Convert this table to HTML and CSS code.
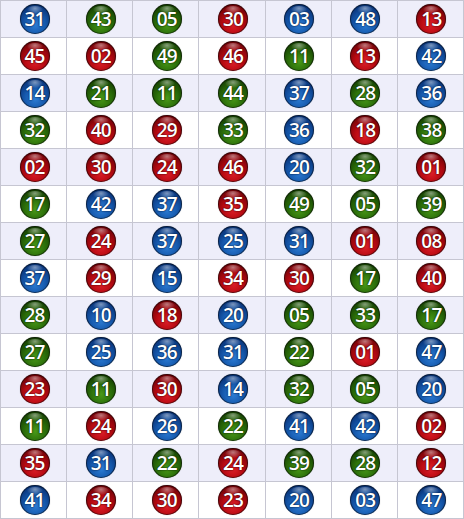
FILE: index.html
```html
<!DOCTYPE html>
<html>
<head>
<meta charset="utf-8">
<link rel="stylesheet" href="styles.css">
</head>
<body>
<div class="grid">
<div class="c a"><span class="b blue">31</span></div><div class="c a"><span class="b green">43</span></div><div class="c a"><span class="b green">05</span></div><div class="c a"><span class="b red">30</span></div><div class="c a"><span class="b blue">03</span></div><div class="c a"><span class="b blue">48</span></div><div class="c a"><span class="b red">13</span></div>
<div class="c"><span class="b red">45</span></div><div class="c"><span class="b red">02</span></div><div class="c"><span class="b green">49</span></div><div class="c"><span class="b red">46</span></div><div class="c"><span class="b green">11</span></div><div class="c"><span class="b red">13</span></div><div class="c"><span class="b blue">42</span></div>
<div class="c a"><span class="b blue">14</span></div><div class="c a"><span class="b green">21</span></div><div class="c a"><span class="b green">11</span></div><div class="c a"><span class="b green">44</span></div><div class="c a"><span class="b blue">37</span></div><div class="c a"><span class="b green">28</span></div><div class="c a"><span class="b blue">36</span></div>
<div class="c"><span class="b green">32</span></div><div class="c"><span class="b red">40</span></div><div class="c"><span class="b red">29</span></div><div class="c"><span class="b green">33</span></div><div class="c"><span class="b blue">36</span></div><div class="c"><span class="b red">18</span></div><div class="c"><span class="b green">38</span></div>
<div class="c a"><span class="b red">02</span></div><div class="c a"><span class="b red">30</span></div><div class="c a"><span class="b red">24</span></div><div class="c a"><span class="b red">46</span></div><div class="c a"><span class="b blue">20</span></div><div class="c a"><span class="b green">32</span></div><div class="c a"><span class="b red">01</span></div>
<div class="c"><span class="b green">17</span></div><div class="c"><span class="b blue">42</span></div><div class="c"><span class="b blue">37</span></div><div class="c"><span class="b red">35</span></div><div class="c"><span class="b green">49</span></div><div class="c"><span class="b green">05</span></div><div class="c"><span class="b green">39</span></div>
<div class="c a"><span class="b green">27</span></div><div class="c a"><span class="b red">24</span></div><div class="c a"><span class="b blue">37</span></div><div class="c a"><span class="b blue">25</span></div><div class="c a"><span class="b blue">31</span></div><div class="c a"><span class="b red">01</span></div><div class="c a"><span class="b red">08</span></div>
<div class="c"><span class="b blue">37</span></div><div class="c"><span class="b red">29</span></div><div class="c"><span class="b blue">15</span></div><div class="c"><span class="b red">34</span></div><div class="c"><span class="b red">30</span></div><div class="c"><span class="b green">17</span></div><div class="c"><span class="b red">40</span></div>
<div class="c a"><span class="b green">28</span></div><div class="c a"><span class="b blue">10</span></div><div class="c a"><span class="b red">18</span></div><div class="c a"><span class="b blue">20</span></div><div class="c a"><span class="b green">05</span></div><div class="c a"><span class="b green">33</span></div><div class="c a"><span class="b green">17</span></div>
<div class="c"><span class="b green">27</span></div><div class="c"><span class="b blue">25</span></div><div class="c"><span class="b blue">36</span></div><div class="c"><span class="b blue">31</span></div><div class="c"><span class="b green">22</span></div><div class="c"><span class="b red">01</span></div><div class="c"><span class="b blue">47</span></div>
<div class="c a"><span class="b red">23</span></div><div class="c a"><span class="b green">11</span></div><div class="c a"><span class="b red">30</span></div><div class="c a"><span class="b blue">14</span></div><div class="c a"><span class="b green">32</span></div><div class="c a"><span class="b green">05</span></div><div class="c a"><span class="b blue">20</span></div>
<div class="c"><span class="b green">11</span></div><div class="c"><span class="b red">24</span></div><div class="c"><span class="b blue">26</span></div><div class="c"><span class="b green">22</span></div><div class="c"><span class="b blue">41</span></div><div class="c"><span class="b blue">42</span></div><div class="c"><span class="b red">02</span></div>
<div class="c a"><span class="b red">35</span></div><div class="c a"><span class="b blue">31</span></div><div class="c a"><span class="b green">22</span></div><div class="c a"><span class="b red">24</span></div><div class="c a"><span class="b green">39</span></div><div class="c a"><span class="b green">28</span></div><div class="c a"><span class="b red">12</span></div>
<div class="c"><span class="b blue">41</span></div><div class="c"><span class="b red">34</span></div><div class="c"><span class="b red">30</span></div><div class="c"><span class="b red">23</span></div><div class="c"><span class="b blue">20</span></div><div class="c"><span class="b blue">03</span></div><div class="c"><span class="b blue">47</span></div>
</div>
</body>
</html>
```
FILE: styles.css
```css
html, body {
  margin: 0;
  padding: 0;
  background: #ffffff;
}
.grid {
  box-sizing: border-box;
  width: 464px;
  height: 519px;
  display: grid;
  grid-template-columns: repeat(7, 1fr);
  grid-auto-rows: 36px;
  gap: 1px;
  padding: 1px;
  background: #c6c6d2;
}
.c {
  background: #ffffff;
  display: flex;
  align-items: center;
  justify-content: center;
}
.c.a {
  background: #eeeefa;
}
.b {
  width: 30px;
  height: 30px;
  margin-left: 2px;
  border-radius: 50%;
  display: flex;
  align-items: center;
  justify-content: center;
  font-family: "Open Sans", "Liberation Sans", sans-serif;
  font-size: 19px;
  font-weight: 600;
  letter-spacing: -0.8px;
  color: #ffffff;
  line-height: 1;
  position: relative;
  box-shadow: inset 0 0 0 1px rgba(0,0,0,0.5), 0 0 1px rgba(0,0,0,0.4);
}
.b::before {
  content: "";
  position: absolute;
  left: 7px;
  top: 2px;
  width: 16px;
  height: 8px;
  border-radius: 50%;
  background: radial-gradient(ellipse at 50% 30%, rgba(255,255,255,0.45), rgba(255,255,255,0) 75%);
}
.blue {
  background: radial-gradient(circle at 50% 68%, #2d7ed6 0%, #165aae 40%, #0b3a82 68%, #041c48 100%);
  text-shadow: 0 0 2px #03183e, 0 0 1px #03183e;
}
.red {
  background: radial-gradient(circle at 50% 68%, #e0202a 0%, #b80a12 40%, #80040a 68%, #420002 100%);
  text-shadow: 0 0 2px #400000, 0 0 1px #400000;
}
.green {
  background: radial-gradient(circle at 50% 68%, #4a9a18 0%, #2c700a 40%, #1a4a04 68%, #0a2400 100%);
  text-shadow: 0 0 2px #0a2000, 0 0 1px #0a2000;
}
```
